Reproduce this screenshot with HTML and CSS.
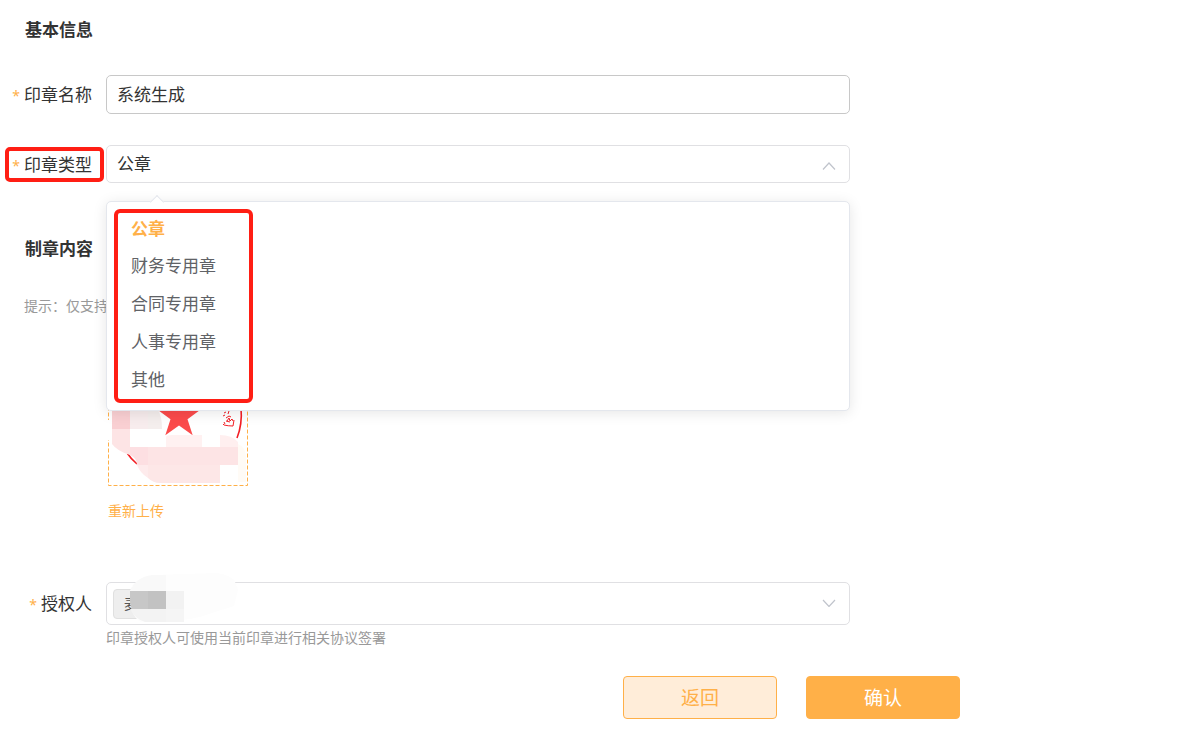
FILE: index.html
```html
<!DOCTYPE html>
<html lang="zh-CN">
<head>
<meta charset="utf-8">
<meta name="viewport" content="width=device-width, initial-scale=1">
<title>印章信息</title>
<link rel="stylesheet" href="styles.css">
</head>
<body>
<form class="form">
  <section class="section">
    <h2 class="title">基本信息</h2>
    <div class="row">
      <label class="label" for="name"><span class="star">*</span>印章名称</label>
      <input class="control control-name" id="name" type="text" value="系统生成">
    </div>
    <div class="row">
      <label class="label label-marked" for="type"><span class="star">*</span>印章类型</label>
      <div class="field">
        <select class="control control-type" id="type">
          <option>公章</option>
          <option>财务专用章</option>
          <option>合同专用章</option>
          <option>人事专用章</option>
          <option>其他</option>
        </select>
        <svg class="arrow" viewBox="0 0 14 8" aria-hidden="true"><path d="M1 7.500 7 1 13 7.500"/></svg>
        <div class="menu">
          <ul class="options">
            <li><button class="option option-active" type="button">公章</button></li>
            <li><button class="option" type="button">财务专用章</button></li>
            <li><button class="option" type="button">合同专用章</button></li>
            <li><button class="option" type="button">人事专用章</button></li>
            <li><button class="option" type="button">其他</button></li>
          </ul>
        </div>
      </div>
    </div>
  </section>

  <section class="section section-content">
    <h2 class="title">制章内容</h2>
    <p class="tip">提示：仅支持</p>
    <div class="upload">
      <svg class="seal" viewBox="0 0 140 140" role="img" aria-label="印章图片">
        <rect class="frame" x="0.500" y="0.500" width="139" height="139"/>
        <path fill="#fff" d="M0 74h5v20H0z"/>
        <path class="ring" d="M133 62Q134.500 78 129 92M19.500 107.500Q23 113 29 118"/>
        <path fill="#fb4b4b" d="M71 47.300l5.200 16h16.900l-13.600 9.900 5.200 16.100-13.700-9.900-13.700 9.900 5.200-16.100-13.600-9.900h16.900z"/>
        <path class="script" d="M116 67l2-1M121 65l-1 3M115 70l2-1M118 72l3-2 2 1M119 75l2-3 1 3 2-2 1 2M118 75l4 1M115 78l1 1q4 1 9 1l1-6M116 76l1 2"/>
        <path fill="#f9cfd2" d="M4 64h18v19H4z"/>
        <path fill="#f7eced" d="M22 64h18v19H22z"/>
        <path fill="#f4eeed" d="M40 64h10q4 6 4 19H40z"/>
        <path fill="#fde4e5" d="M4 83h18v26Q9 105 4 98z"/>
        <path fill="#fddfe2" d="M22 101h18v18H29q0-7-7-10z"/>
        <path fill="#fff1f1" d="M58 91q0-2 6-2h30v12H58z"/>
        <path fill="#ffefef" d="M112 89q12 0 18 7v5h-18z"/>
        <path fill="#fde4e5" d="M40 101h90v18H40z"/>
        <path fill="#feebec" d="M29 119h11v13q-8-5-11-13z"/>
        <path fill="#fde7e7" d="M40 119h72v18H52q-7 0-12-5z"/>
        <path fill="#fffbf6" d="M130 98q8 3 8 14v24h-8z"/>
      </svg>
      <a class="link" href="#upload">重新上传</a>
    </div>
  </section>

  <div class="row row-person">
    <label class="label" for="person"><span class="star">*</span>授权人</label>
    <div class="field">
      <button class="control control-person" id="person" type="button">
        <span class="tag">麦</span>
        <svg class="mosaic" viewBox="0 0 132 50" aria-hidden="true">
          <path fill="#fdfdfd" d="M23 18Q29 4 45 2l65-2q14 2 18 9l3 8-4 16-22 7Q80 50 34 49 22 43 23 18z"/>
          <path fill="#f9f9f9" d="M23 18Q29 4 45 2h14v16z"/>
          <path fill="#f3f3f3" d="M23 36h36v13H38q-10-3-15-13z"/>
          <path fill="#c7c7c7" d="M23 18h18v18H25q-2-3-2-8z"/>
          <path fill="#c2c2c2" d="M41 18h18v18H41z"/>
          <path fill="#f2f2f2" d="M59 18h18v18H59z"/>
          <path fill="#f5f5f5" d="M59 36h18v13H59z"/>
        </svg>
      </button>
      <svg class="arrow arrow-person" viewBox="0 0 14 8" aria-hidden="true"><path d="M1 1 7 7.500 13 1"/></svg>
      <p class="help">印章授权人可使用当前印章进行相关协议签署</p>
    </div>
  </div>

  <div class="actions">
    <button class="btn btn-back" type="button">返回</button>
    <button class="btn btn-ok" type="submit">确认</button>
  </div>
</form>
</body>
</html>
```
FILE: styles.css
```css
* { box-sizing: border-box; }
body {
  margin: 0;
  background: #fff;
  color: #333;
  font: 17px/24px "Noto Sans CJK SC", sans-serif;
}
.form {
  max-width: 960px;
  padding: 17px 0 25px;
}
.title {
  margin: 0 0 34px 25px;
  font-size: 17px;
  line-height: 24px;
  font-weight: 700;
}
.row {
  display: grid;
  grid-template-columns: 106px minmax(0, 744px);
  align-items: start;
}
.row + .row { margin-top: 31px; }
.label {
  position: relative;
  height: 38px;
  padding: 7px 14px 7px 0;
  text-align: right;
}
.star {
  margin-right: 4px;
  color: #ffb048;
  font-family: "Noto Sans", sans-serif;
  font-size: 14px;
  line-height: 1;
}
.label-marked::after {
  content: "";
  position: absolute;
  inset: 2px 2px 1px 5px;
  border: 4px solid #ff1e14;
  border-radius: 5px;
}
.field { position: relative; }
.control {
  display: block;
  width: 100%;
  height: 38px;
  padding: 0 10px 2px;
  border: 1px solid #e0e0e3;
  border-radius: 5px;
  background: #fff;
  color: #333;
  font: inherit;
  text-align: left;
  appearance: none;
}
.control-name {
  height: 39px;
  border-color: #c8c8c8;
}
.arrow {
  position: absolute;
  top: 17px;
  right: 14px;
  width: 14px;
  height: 8px;
  fill: none;
  stroke: #c0c4cc;
  stroke-width: 1.2;
  pointer-events: none;
}
.menu {
  position: absolute;
  z-index: 2;
  top: 56px;
  left: 0;
  right: 0;
  padding: 7px;
  border: 1px solid #e4e7ed;
  border-radius: 5px;
  background: #fff;
  box-shadow: 0 2px 14px rgba(0, 0, 0, 0.1);
}
.menu::before {
  content: "";
  position: absolute;
  top: -5px;
  left: 45px;
  width: 9px;
  height: 9px;
  border: solid #e4e7ed;
  border-width: 1px 0 0 1px;
  background: #fff;
  transform: rotate(45deg);
}
.options {
  position: relative;
  width: 139px;
  margin: 0;
  padding: 0;
  border: 4px solid #ff1e14;
  border-radius: 6px;
  list-style: none;
}
.option {
  display: block;
  width: 100%;
  height: 38px;
  padding: 0 13px 2px;
  border: 0;
  background: none;
  color: #606266;
  font: inherit;
  text-align: left;
}
.option-active {
  height: 34px;
  padding-bottom: 4px;
  color: #ffb048;
  font-weight: 700;
}
.section-content { margin-top: 53px; }
.section-content .title { margin-bottom: 35px; }
.tip,
.help {
  margin: 0;
  color: #999;
  font-size: 14px;
  line-height: 20px;
}
.tip { margin-left: 24px; }
.help { margin-top: 2px; }
.upload {
  display: flex;
  flex-direction: column;
  align-items: flex-start;
  gap: 14px;
  margin: 31px 0 0 108px;
}
.seal {
  display: block;
  width: 140px;
  height: 140px;
}
.frame {
  fill: none;
  stroke: #ffb048;
  stroke-dasharray: 4 2;
}
.ring {
  fill: none;
  stroke: #f31e24;
  stroke-width: 1.6;
}
.script {
  fill: none;
  stroke: #f31e24;
}
.link {
  color: #ffb048;
  font-size: 14px;
  line-height: 20px;
  text-decoration: none;
}
.row-person { margin-top: 62px; }
.row-person .label { padding-top: 9px; }
.control-person {
  position: relative;
  height: 43px;
  padding: 0 6px;
}
.tag {
  display: block;
  width: 32px;
  height: 30px;
  padding: 3px 10px;
  border: 1px solid #e0e0e0;
  border-radius: 4px;
  background: #eee;
  color: #555;
  font-size: 14px;
  line-height: 20px;
}
.mosaic {
  position: absolute;
  top: -10px;
  left: 0;
  width: 132px;
  height: 50px;
}
.actions {
  display: flex;
  justify-content: flex-end;
  gap: 29px;
  margin-top: 29px;
}
.btn {
  width: 154px;
  height: 43px;
  padding: 0 0 2px;
  border: 1px solid #ffb048;
  border-radius: 4px;
  font: inherit;
  font-size: 19px;
}
.btn-back {
  background: #ffedd9;
  color: #ffb048;
}
.btn-ok {
  background: #ffb048;
  color: #fff;
}
```
